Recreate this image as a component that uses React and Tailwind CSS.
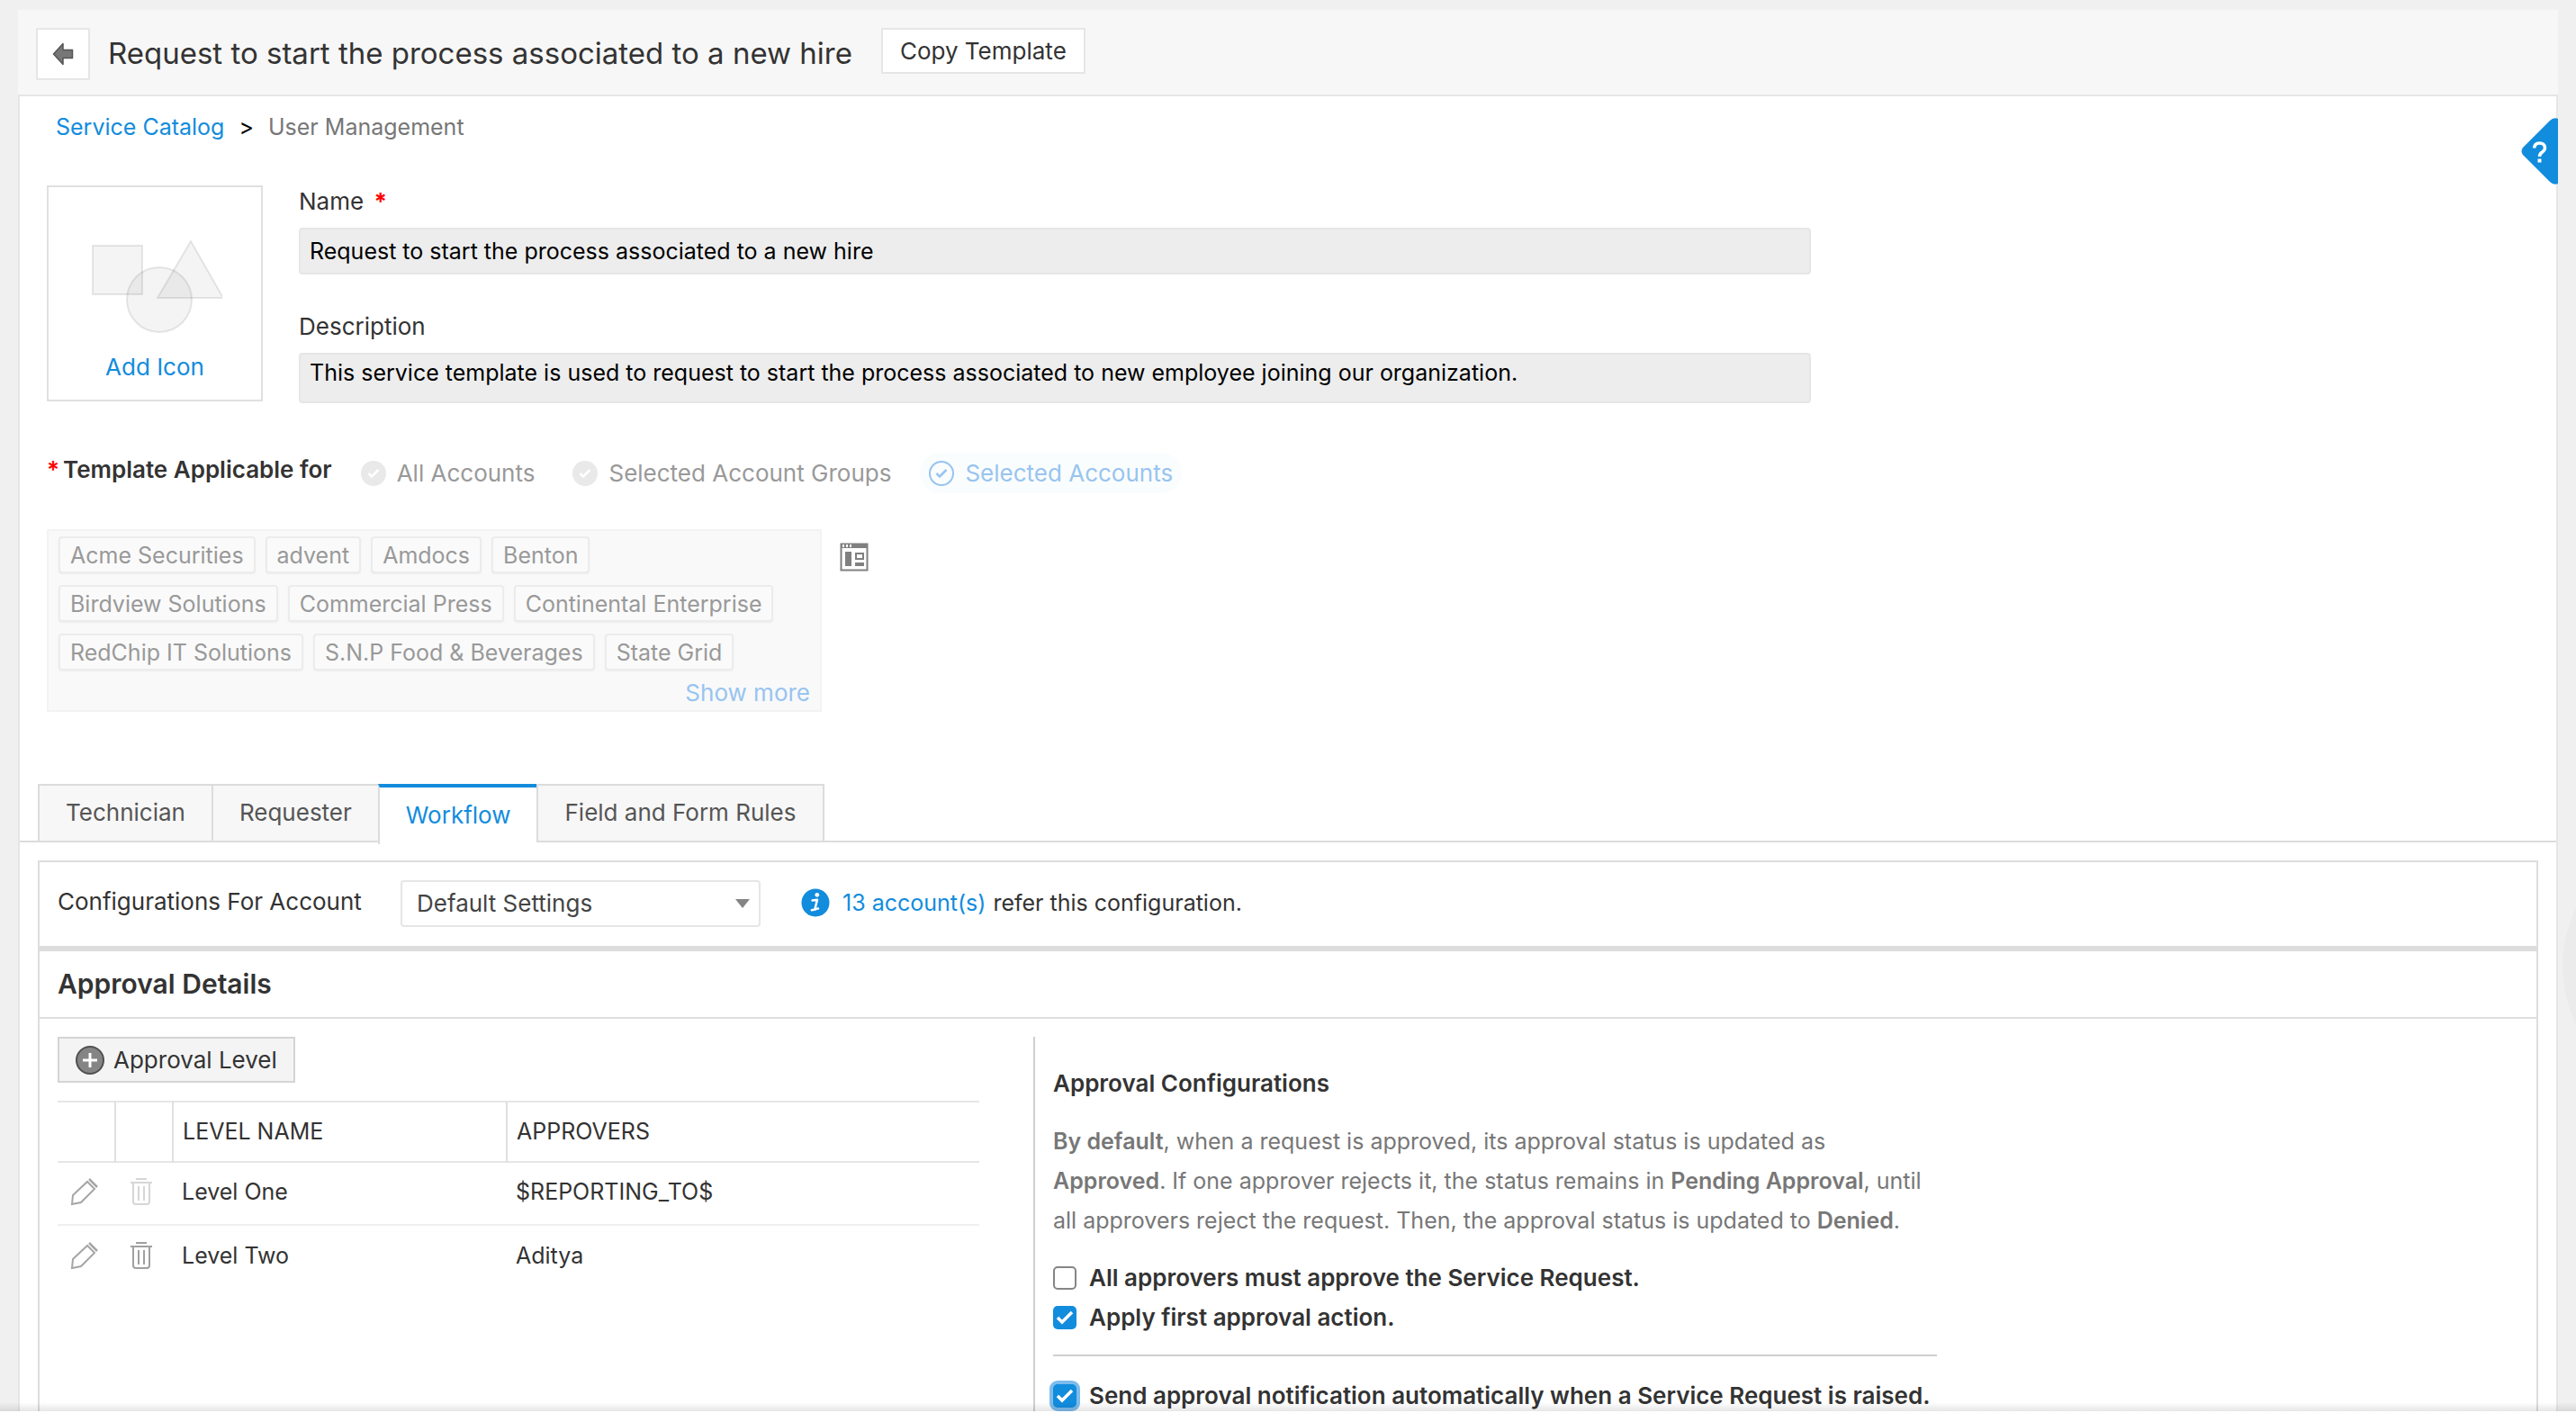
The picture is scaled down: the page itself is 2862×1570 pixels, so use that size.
import React from 'react';
import { clsx } from 'clsx';

const accountRows = [
  ['Acme Securities', 'advent', 'Amdocs', 'Benton'],
  ['Birdview Solutions', 'Commercial Press', 'Continental Enterprise'],
  ['RedChip IT Solutions', 'S.N.P Food & Beverages', 'State Grid'],
];

const tabs = ['Technician', 'Requester', 'Workflow', 'Field and Form Rules'];

const levels = [
  { name: 'Level One', approvers: '$REPORTING_TO$', canDelete: false },
  { name: 'Level Two', approvers: 'Aditya', canDelete: true },
];

const BackIcon = () => (
  <svg width="24" height="26" viewBox="0 0 24 26" aria-hidden="true">
    <path d="M1.5 13 12 1.5V8.500h10.500v9H12v7z" fill="#777" stroke="#555" strokeWidth="1.500" strokeLinejoin="round" />
  </svg>
);

const ShapesIcon = () => (
  <svg width="150" height="112" viewBox="0 0 150 112" aria-hidden="true">
    <g fill="#000" fillOpacity="0.045" stroke="#000" strokeOpacity="0.09" strokeWidth="2">
      <rect x="6" y="15" width="55" height="54" />
      <path d="M115 10 151 73H78z" />
      <circle cx="80" cy="75" r="36" />
    </g>
  </svg>
);

const FormIcon = () => (
  <svg width="32" height="32" viewBox="0 0 32 32" aria-hidden="true">
    <path d="M1.500 1.500h29v29h-29z" fill="#fff" stroke="#808080" strokeWidth="2" />
    <path d="M1 1h30v5H1z" fill="#808080" />
    <path d="M3 2h2v3H3zM7 2h2v3H7zM11 2h2v3h-2z" fill="#fff" />
    <path d="M6 10h7v16H6zM17 22h10v4H17z" fill="#808080" />
    <path d="M18 12h8v6h-8z" fill="none" stroke="#808080" strokeWidth="2" />
  </svg>
);

const InfoIcon = () => (
  <svg width="32" height="32" viewBox="0 0 32 32" aria-hidden="true">
    <circle cx="16" cy="16" r="15.500" fill="#128cdd" />
    <circle cx="17.800" cy="7.300" r="2.400" fill="#fff" />
    <path d="M12.500 13.500l5.500-.8-2.600 10.300 3.600-.6M11.800 24.300l4.200-.7" fill="none" stroke="#fff" strokeWidth="2.500" strokeLinecap="round" strokeLinejoin="round" />
  </svg>
);

const PlusIcon = () => (
  <svg width="32" height="32" viewBox="0 0 32 32" aria-hidden="true">
    <circle cx="16" cy="16" r="15" fill="#858585" stroke="#505050" strokeWidth="2" />
    <path d="M16 8v16M8 16h16" stroke="#fff" strokeWidth="3" />
  </svg>
);

const PencilIcon = () => (
  <svg width="32" height="32" viewBox="0 0 32 32" fill="none" stroke="#a6a6a6" strokeWidth="2" aria-hidden="true">
    <path d="M2 30l1-10L19 5l8 8-15 15z" />
    <path d="M21 2l9 9" strokeWidth="2.500" />
  </svg>
);

const TrashIcon = ({ muted }) => (
  <svg width="26" height="32" viewBox="0 0 26 32" fill="none" stroke={muted ? '#d6d6d6' : '#a0a0a0'} strokeWidth="2" aria-hidden="true">
    <path d="M7 2h12M1 6h24M4 6v21q0 3 3 3h12q3 0 3-3V6M10 10v16M16 10v16" />
  </svg>
);

const CheckRadio = ({ label, checked }) => (
  <label
    className={clsx(
      'flex h-[45px] items-center gap-3 rounded-full px-2.5 text-[26px]',
      checked ? 'bg-[#fafdfd] text-[#98c4f0]' : 'text-[#999]'
    )}
  >
    <span className="grid place-items-center">
      <input
        type="radio"
        name="applicable"
        defaultChecked={checked}
        className={clsx(
          'col-start-1 row-start-1 size-7 appearance-none rounded-full',
          checked ? 'border-2 border-[#98c4f0]' : 'bg-[#e9e9e9]'
        )}
      />
      <svg width="14" height="12" viewBox="0 0 14 12" className="pointer-events-none col-start-1 row-start-1" aria-hidden="true">
        <path d="M1.500 6l3.500 3.500L12.500 2" fill="none" stroke={checked ? '#98c4f0' : '#fff'} strokeWidth="2.500" />
      </svg>
    </span>
    {label}
  </label>
);

const CheckOption = ({ label, checked, focused }) => (
  <label className="flex h-11 items-center gap-3.5 text-[26px] font-semibold text-[#333]">
    <span className="grid place-items-center">
      <input
        type="checkbox"
        defaultChecked={checked}
        className={clsx(
          'col-start-1 row-start-1 size-[26px] appearance-none rounded-[5px]',
          checked ? 'bg-[#128cdd]' : 'border-2 border-[#858585] bg-white',
          focused && 'ring-4 ring-[#7dbcec]'
        )}
      />
      {checked && (
        <svg width="20" height="18" viewBox="0 0 20 18" className="pointer-events-none col-start-1 row-start-1" aria-hidden="true">
          <path d="M2 9l5 5L18 3" fill="none" stroke="#fff" strokeWidth="3.500" />
        </svg>
      )}
    </span>
    {label}
  </label>
);

const PageHeader = () => (
  <header className="flex h-24 items-start gap-5 border-b-2 border-[#e6e6e6] bg-[#f7f7f7] px-5 pt-5">
    <button type="button" aria-label="Back" className="flex h-[58px] w-[60px] items-center justify-center border-2 border-[#e6e6e6] bg-white">
      <BackIcon />
    </button>
    <h1 className="text-[33px] leading-[56px] text-[#333]">Request to start the process associated to a new hire</h1>
    <button type="button" className="ml-3 h-[51px] border-2 border-[#e6e6e6] bg-white px-[19px] text-[26px] leading-[44px] text-[#333]">
      Copy Template
    </button>
  </header>
);

const TemplateDetails = () => (
  <section className="mt-[47px] flex items-start gap-10 pl-[30px]">
    <button type="button" className="flex h-60 w-60 flex-col items-center justify-end gap-5 border-2 border-[#e0e0e0] pb-[18px] text-[26px] text-[#128cdd]">
      <ShapesIcon />
      Add Icon
    </button>
    <div className="w-full max-w-[1680px]">
      <label htmlFor="name" className="block text-[26px] leading-[35px] text-[#333]">
        Name <span className="ml-1 font-bold text-[#f00]">*</span>
      </label>
      <input
        id="name"
        defaultValue="Request to start the process associated to a new hire"
        className="mt-3 block h-[52px] w-full rounded-sm border-2 border-[#e6e6e6] bg-[#ededed] px-2.5 text-black"
      />
      <label htmlFor="description" className="mt-10 block text-[26px] leading-[35px] text-[#333]">
        Description
      </label>
      <textarea
        id="description"
        rows={1}
        defaultValue="This service template is used to request to start the process associated to new employee joining our organization."
        className="mt-3 block h-14 w-full resize-none overflow-hidden rounded-sm border-2 border-[#e6e6e6] bg-[#ededed] px-2.5 py-0.5 text-black"
      />
    </div>
  </section>
);

const ApplicableFor = () => (
  <section className="mt-[55px] pl-[30px]">
    <div className="flex items-center gap-[22px]">
      <h2 className="pb-2 text-[26px] font-semibold text-[#333]">
        <span className="mr-1 text-[#f00]">*</span>Template Applicable for
      </h2>
      <CheckRadio label="All Accounts" />
      <CheckRadio label="Selected Account Groups" />
      <CheckRadio label="Selected Accounts" checked />
    </div>
    <div className="mt-10 flex items-start gap-5">
      <div className="flex h-[203px] w-[861px] flex-col gap-[13px] border-2 border-[#f3f3f3] bg-[#f9f9f9] px-[11px] py-1.5 text-[#999]">
        {accountRows.map((row) => (
          <div key={row[0]} className="flex gap-[11px]">
            {row.map((account) => (
              <span key={account} className="h-[41px] rounded-sm border-2 border-[#ececec] bg-[#fafafa] px-[11px] leading-[38px] shadow-xs">
                {account}
              </span>
            ))}
          </div>
        ))}
        <a href="#accounts" className="-mt-1.5 self-end text-[26px] text-[#98c4f0]">
          Show more
        </a>
      </div>
      <button type="button" aria-label="Choose accounts" className="mt-[15px]">
        <FormIcon />
      </button>
    </div>
  </section>
);

const TabBar = () => (
  <nav className="mt-20 flex h-[65px] border-b-2 border-[#dcdcdc] pl-5">
    {tabs.map((tab, i) => {
      const active = tab === 'Workflow';
      return (
        <button
          key={tab}
          type="button"
          className={clsx(
            'border-l-2 border-[#dcdcdc] px-[29px] pb-0.5 text-[26px]',
            active ? 'h-[67px] border-t-4 border-t-[#128cdd] bg-white text-[#128cdd]' : 'h-[63px] border-t-2 bg-[#f7f7f7] text-[#555]',
            i === tabs.length - 1 && 'border-r-2'
          )}
        >
          {tab}
        </button>
      );
    })}
  </nav>
);

const AccountConfig = () => (
  <div className="flex h-[95px] items-center border-x-2 border-t-2 border-[#dcdddc] px-5 pb-0.5">
    <label htmlFor="account" className="w-[381px] pb-1 text-[26px] text-[#333]">
      Configurations For Account
    </label>
    <div className="relative w-[400px]">
      <select id="account" className="h-[52px] w-full appearance-none rounded-sm border-2 border-[#e6e6e6] bg-white pl-4 text-[26px] text-[#444]">
        <option>Default Settings</option>
      </select>
      <svg width="16" height="10" viewBox="0 0 16 10" className="pointer-events-none absolute top-[21px] right-3" aria-hidden="true">
        <path d="M0 0h16L8 10z" fill="#858585" />
      </svg>
    </div>
    <p className="flex items-center pb-0.5 pl-[45px] text-[#333]">
      <InfoIcon />
      <a href="#references" className="mr-2 ml-3.5 text-[#128cdd]">
        13 account(s)
      </a>
      refer this configuration.
    </p>
  </div>
);

const LevelTable = () => (
  <table className="mt-5 w-full border-t-2 border-[#e6e6e6] text-left text-[#333]">
    <thead>
      <tr className="h-[67px] border-b-2 border-[#e6e6e6]">
        <th aria-label="Edit" className="w-16 border-r-2 border-[#e0e0e0]" />
        <th aria-label="Delete" className="w-16 border-r-2 border-[#e0e0e0]" />
        <th className="w-[371px] border-r-2 border-[#e0e0e0] pb-0.5 pl-2.5 font-normal">LEVEL NAME</th>
        <th className="pb-0.5 pl-2.5 font-normal">APPROVERS</th>
      </tr>
    </thead>
    <tbody>
      {levels.map((level) => (
        <tr key={level.name} className="h-[70px] border-b-2 border-[#efefef] last:border-b-0">
          <td className="pb-1 pl-3.5">
            <button type="button" aria-label="Edit level" className="block">
              <PencilIcon />
            </button>
          </td>
          <td className="pb-1 pl-4">
            <button type="button" aria-label="Delete level" className="block" disabled={!level.canDelete}>
              <TrashIcon muted={!level.canDelete} />
            </button>
          </td>
          <td className="pb-1 pl-2.5">{level.name}</td>
          <td className="pb-1 pl-2.5">{level.approvers}</td>
        </tr>
      ))}
    </tbody>
  </table>
);

const ApprovalConfig = () => (
  <div className="mt-5 flex-1 border-l-2 border-[#cfcfcf] pt-[34px] pl-5">
    <div className="max-w-[982px]">
      <h3 className="text-[26px] font-semibold text-[#333]">Approval Configurations</h3>
      <p className="mt-6 leading-[44px] text-[#777]">
        <b className="font-semibold">By default</b>, when a request is approved, its approval status is updated as{' '}
        <b className="font-semibold">Approved</b>. If one approver rejects it, the status remains in{' '}
        <b className="font-semibold">Pending Approval</b>, until all approvers reject the request. Then, the approval
        status is updated to <b className="font-semibold">Denied</b>.
      </p>
      <div className="mt-5">
        <CheckOption label="All approvers must approve the Service Request." />
        <CheckOption label="Apply first approval action." checked />
      </div>
      <hr className="mt-[19px] mb-[22px] border-t-2 border-[#cfcfcf]" />
      <CheckOption label="Send approval notification automatically when a Service Request is raised." checked focused />
    </div>
  </div>
);

const HelpTab = () => (
  <button type="button" aria-label="Help" className="absolute top-[131px] right-5">
    <svg width="41" height="74" viewBox="0 0 41 74" className="block" aria-hidden="true">
      <path d="M41 1Q36-1 32 3L2 33q-3 4 0 8l30 30q4 4 9 2z" fill="#128cdd" />
      <path d="M14.500 33.500Q15 28 20.500 28t6 5q0 3-3 5-3 2-3 5" fill="none" stroke="#fff" strokeWidth="3.500" />
      <path d="M18.500 45.500h4v4h-4z" fill="#fff" />
    </svg>
  </button>
);

export default function App() {
  return (
    <div className="relative flex h-screen flex-col overflow-hidden bg-[#f0f0f0] px-5 pt-[11px] font-['Inter',sans-serif] text-[25px] leading-9">
      <PageHeader />
      <main className="flex min-h-0 flex-1 flex-col border-x-2 border-[#e6e6e6] bg-white">
        <nav className="flex gap-4 pt-4 pl-10 text-[#777]">
          <a href="#catalog" className="text-[#128cdd]">
            Service Catalog
          </a>
          <span className="text-black">&gt;</span>
          <span>User Management</span>
        </nav>
        <TemplateDetails />
        <ApplicableFor />
        <TabBar />
        <section className="mx-5 mt-5 flex min-h-0 flex-1 flex-col">
          <AccountConfig />
          <h2 className="h-[81px] border-x-2 border-t-6 border-b-2 border-[#dcdddc] px-5 text-[30px] leading-[73px] font-semibold text-[#333]">
            Approval Details
          </h2>
          <div className="flex min-h-0 flex-1 border-x-2 border-[#dcdddc] pl-5">
            <div className="mr-[60px] w-[1024px] pt-5">
              <button type="button" className="flex h-[51px] items-center gap-2.5 border-2 border-[#d4d4d4] bg-[#f4f4f4] px-[18px] text-[26px] text-[#333]">
                <PlusIcon />
                Approval Level
              </button>
              <LevelTable />
            </div>
            <ApprovalConfig />
          </div>
        </section>
      </main>
      <HelpTab />
      <div className="pointer-events-none absolute top-[926px] -right-[280px] size-[295px] rounded-full bg-black/2" />
      <div className="pointer-events-none absolute inset-x-0 bottom-0 h-3 border-b-2 border-white bg-linear-to-b from-transparent to-black/10" />
    </div>
  );
}
